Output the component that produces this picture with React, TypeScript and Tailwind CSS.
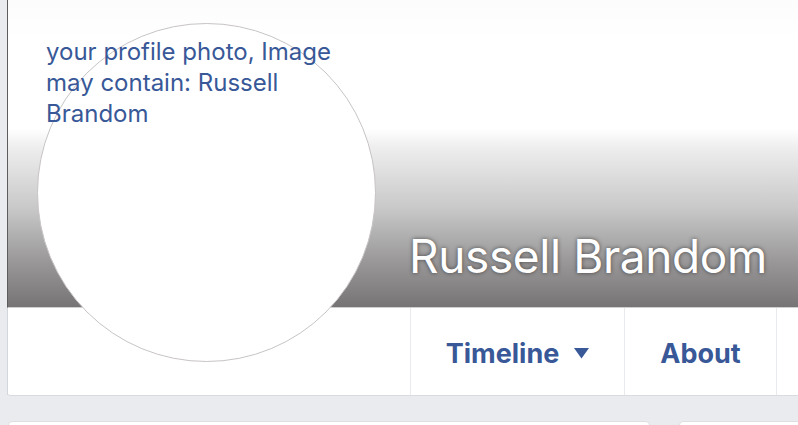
import React from "react";

export default function App() {
  return (
    <div
      className="w-[798px] h-[425px] overflow-hidden bg-[#e9ebee] pl-[7px]"
      style={{ fontFamily: "Inter, 'Liberation Sans', sans-serif" }}
    >
      <div className="relative w-[900px] bg-white rounded-b-[4px] border-b border-r border-[#d9dadd]">
        {/* cover */}
        <div className="h-[308px] border-l border-[#5e5c5d] bg-[linear-gradient(to_bottom,#fcfcfd_0%,#ffffff_13%,#ffffff_42%,#eeeeee_48%,#c8c8c8_68%,#9a9899_85%,#777475_100%)] flex items-end pl-[401px] pb-[28px] border-b border-b-[#cfcfcf]">
          <h1 className="text-white text-[46px] leading-none font-normal tracking-[-0.4px] [text-shadow:0_0_4px_rgba(0,0,0,0.55)]">
            Russell Brandom
          </h1>
        </div>
        {/* nav */}
        <div className="h-[87px] flex border-l border-[#d3d6db]">
          <div className="w-[402px] shrink-0" />
          <div className="w-[214px] shrink-0 border-l border-[#e9eaed] flex items-center justify-center pt-[4px] gap-[15px]">
            <span className="text-[#385898] text-[27px] font-bold leading-none">Timeline</span>
            <svg width="15" height="11" viewBox="0 0 15 11">
              <path d="M0 0 H15 L7.5 10.5 Z" fill="#385898" />
            </svg>
          </div>
          <div className="w-[152px] shrink-0 border-l border-[#e9eaed] flex items-center justify-center pt-[4px]">
            <span className="text-[#385898] text-[27px] font-bold leading-none">About</span>
          </div>
          <div className="w-[130px] shrink-0 border-l border-[#e9eaed]" />
        </div>

        {/* profile picture */}
        <div className="absolute left-[30px] top-[23px] w-[339px] h-[339px] rounded-full bg-white border-[1.5px] border-[#c8c4c5]" />
        <div className="absolute left-[39px] top-[36px] w-[310px] text-[24px] leading-[31px] text-[#385898]">
          your profile photo, Image may contain: Russell Brandom
        </div>
      </div>

      {/* lower cards */}
      <div className="flex gap-[29px] mt-[25px] pl-[1px]">
        <div className="w-[642px] shrink-0 h-[20px] bg-white border border-[#dddfe2] rounded-t-[4px]" />
        <div className="w-[200px] shrink-0 h-[20px] bg-white border border-[#dddfe2] rounded-t-[4px]" />
      </div>
    </div>
  );
}
